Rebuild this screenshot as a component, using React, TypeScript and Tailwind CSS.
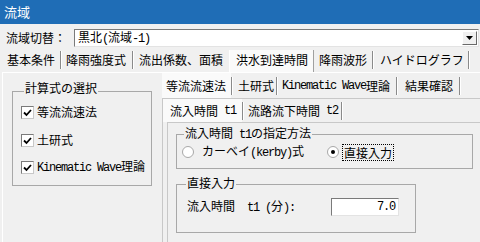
import type { ReactNode } from 'react';

const jp = "font-['Noto_Sans_CJK_JP',sans-serif]";

function Mono({ children }: { children: ReactNode }) {
  return (
    <span className="font-['Liberation_Mono',monospace] text-[12px] tracking-[-1.2px] whitespace-pre">
      {children}
    </span>
  );
}

function Sep() {
  return <span className="h-[18px] w-[2px] shrink-0 border-l border-r border-l-[#8a8a8a] border-r-white" />;
}

function Tab({
  children,
  pl,
  pr,
  selected = false,
  sep = true,
}: {
  children: ReactNode;
  pl: string;
  pr: string;
  selected?: boolean;
  sep?: boolean;
}) {
  return (
    <>
      <span
        className={`flex h-full items-center whitespace-pre ${pl} ${pr} ${
          selected ? 'bg-[#fafafa]' : ''
        }`}
      >
        {children}
      </span>
      {sep && <Sep />}
    </>
  );
}

function CheckBox() {
  return (
    <span className="flex h-[13px] w-[13px] shrink-0 items-center justify-center border border-t-[#7a7a7a] border-l-[#7a7a7a] border-r-[#c8c8c8] border-b-[#c8c8c8] bg-white">
      <svg width="9" height="9" viewBox="0 0 9 9">
        <path d="M1 4.5 L3.5 7 L8 2" fill="none" stroke="#000" strokeWidth="1.8" />
      </svg>
    </span>
  );
}

function Radio({ checked = false }: { checked?: boolean }) {
  return (
    <span className="flex h-[12px] w-[12px] shrink-0 items-center justify-center rounded-full border border-[#a8a8a8] bg-white">
      {checked && <span className="h-[4px] w-[4px] rounded-full bg-black" />}
    </span>
  );
}

function CheckRow({ label, mt }: { label: ReactNode; mt: string }) {
  return (
    <div className={`flex h-[14px] items-center pl-[8px] ${mt}`}>
      <CheckBox />
      <span className="ml-[3px] whitespace-pre">{label}</span>
    </div>
  );
}

export default function App() {
  return (
    <div
      className={`h-[242px] w-[480px] overflow-hidden bg-[#f0f0f0] text-[12px] leading-[14px] text-black ${jp}`}
    >
      {/* title bar */}
      <div className="flex h-[24px] items-center bg-[#1f6db6] pl-[4px] text-[13px] text-white">流域</div>

      {/* 流域切替 */}
      <div className="flex h-[24px] items-start pt-[5px]">
        <span className="ml-[6px] flex h-[18px] w-[68px] items-center">流域切替：</span>
        <div className="flex h-[18px] w-[405px] items-center border border-t-[#7a7a7a] border-l-[#7a7a7a] border-r-[#e3e3e3] border-b-[#e3e3e3] bg-white">
          <span className="pl-[3px] whitespace-pre">
            黒北<Mono>(</Mono>流域<Mono>-1)</Mono>
          </span>
          <span className="ml-auto mr-[1px] flex h-[14px] w-[15px] items-center justify-center border border-t-white border-l-white border-r-[#696969] border-b-[#696969] bg-[#f0f0f0]">
            <svg width="7" height="4" viewBox="0 0 7 4">
              <path d="M0 0 H7 L3.5 4 Z" fill="#000" />
            </svg>
          </span>
        </div>
      </div>

      {/* main tabs */}
      <div className="flex h-[24px] items-center pl-[2px]">
        <Tab pl="pl-[5px]" pr="pr-[5px]">基本条件</Tab>
        <Tab pl="pl-[4px]" pr="pr-[6px]">降雨強度式</Tab>
        <Tab pl="pl-[5px]" pr="pr-[6px]" sep={false}>流出係数、面積</Tab>
        <span className="flex h-[22px] items-center self-end border-l border-r border-l-white border-r-[#a0a0a0] bg-[#fafafa] pl-[6px] pr-[5px] pb-[2px]">
          洪水到達時間
        </span>
        <Tab pl="pl-[5px]" pr="pr-[5px]">降雨波形</Tab>
        <Tab pl="pl-[6px]" pr="pr-[4px]">ハイドログラフ</Tab>
      </div>

      {/* main panel */}
      <div className="ml-[2px] flex h-[170px] border-t border-l border-t-white border-l-white">
        {/* left column */}
        <div className="w-[159px] shrink-0">
          <div className="relative ml-[9px] mt-[18px] h-[95px] w-[140px] border border-[#a8a8a8]">
            <span className="absolute left-[11px] top-[-11px] bg-[#f0f0f0] px-[1px]">計算式の選択</span>
            <CheckRow label="等流流速法" mt="mt-[13px]" />
            <CheckRow label="土研式" mt="mt-[14px]" />
            <CheckRow
              label={
                <>
                  <Mono>Kinematic Wave</Mono>理論
                </>
              }
              mt="mt-[13px]"
            />
          </div>
        </div>

        {/* right column: inner tab control */}
        <div className="flex flex-1 flex-col">
          <div className="flex h-[25px] items-center">
            <Tab pl="pl-[4px]" pr="pr-[5px]" selected>等流流速法</Tab>
            <Tab pl="pl-[5px]" pr="pr-[2px]">土研式</Tab>
            <Tab pl="pl-[4px]" pr="pr-[6px]">
              <Mono>Kinematic Wave</Mono>理論
            </Tab>
            <Tab pl="pl-[7px]" pr="pr-[6px]">結果確認</Tab>
          </div>

          <div className="flex flex-1 flex-col border-t border-l border-t-[#c8c8c8] border-l-[#c8c8c8]">
            <div className="flex h-[23px] items-center">
              <Tab pl="pl-[7px]" pr="pr-[6px]" selected>
                流入時間<Mono> t1</Mono>
              </Tab>
              <Tab pl="pl-[4px]" pr="pr-[3px]">
                流路流下時間<Mono> t2</Mono>
              </Tab>
            </div>

            <div className="ml-[4px] flex-1 border-t border-l border-t-[#c8c8c8] border-l-[#c8c8c8]">
              {/* 指定方法 */}
              <div className="relative ml-[8px] mt-[11px] h-[35px] w-[297px] border border-[#a8a8a8]">
                <span className="absolute left-[7px] top-[-9px] bg-[#f0f0f0] px-[1px] whitespace-pre">
                  流入時間<Mono> t1</Mono>の指定方法
                </span>
                <div className="mt-[10px] flex h-[14px] items-center pl-[5px]">
                  <Radio />
                  <span className="ml-[8px] whitespace-pre">
                    カーベイ<Mono>(kerby)</Mono>式
                  </span>
                  <span className="ml-[23px]">
                    <Radio checked />
                  </span>
                  <span className="ml-[3px] border border-dotted border-black px-[1px] leading-[15px]">直接入力</span>
                </div>
              </div>

              {/* 直接入力 */}
              <div className="relative ml-[8px] mt-[15px] h-[49px] w-[240px] border border-[#a8a8a8]">
                <span className="absolute left-[9px] top-[-9px] bg-[#f0f0f0] px-[1px]">直接入力</span>
                <div className="mt-[13px] flex h-[18px] items-center pl-[10px]">
                  <span className="w-[144px] whitespace-pre">
                    流入時間<Mono>  t1 (</Mono>分<Mono>):</Mono>
                  </span>
                  <span className="flex h-[18px] w-[68px] items-center justify-end border border-t-[#7a7a7a] border-l-[#7a7a7a] border-r-[#e3e3e3] border-b-[#e3e3e3] bg-white pr-[3px]">
                    <Mono>7.0</Mono>
                  </span>
                </div>
              </div>
            </div>
          </div>
        </div>
      </div>
    </div>
  );
}
